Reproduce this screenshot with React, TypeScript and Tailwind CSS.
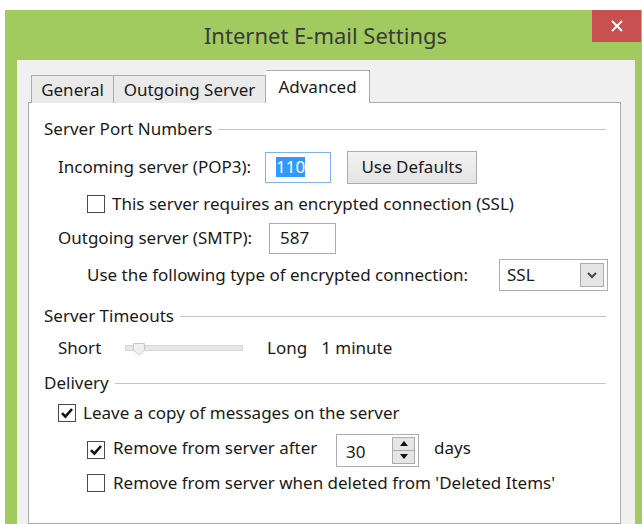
import React from "react";

const font = { fontFamily: '"Noto Sans", "Open Sans", sans-serif' };

const GroupTitle: React.FC<{ label: string; className?: string }> = ({ label, className }) => (
  <div className={`flex h-[20px] items-center gap-[6px] pr-[14px] ${className ?? ""}`}>
    <span className="whitespace-nowrap">{label}</span>
    <div className="h-px flex-1 bg-[#c4c4c4]" />
  </div>
);

const CheckBox: React.FC<{ checked?: boolean }> = ({ checked }) => (
  <div className="flex h-[18px] w-[18px] shrink-0 items-center justify-center border border-[#4a4a4a] bg-white">
    {checked && (
      <svg width="14" height="14" viewBox="0 0 14 14">
        <path d="M2 7.2 L5.4 10.6 L12 3" fill="none" stroke="#111" strokeWidth="2.6" />
      </svg>
    )}
  </div>
);

const App: React.FC = () => {
  return (
    <div className="h-[524px] w-[642px] overflow-hidden bg-white pl-[5px] pt-[10px] text-[17px] leading-[20px] text-[#1a1a1a]" style={font}>
      <div className="relative h-[514px] bg-[#a1cb5e]">
        {/* title bar */}
        <div className="flex h-[50px] items-center justify-center pl-[4px] text-[22px] text-[#3a3a3a]">
          Internet E-mail Settings
        </div>
        <div className="absolute right-[1px] top-0 flex h-[32px] w-[49px] items-center justify-center bg-[#c75050]">
          <svg width="12" height="12" viewBox="0 0 12 12">
            <path d="M1 1 L11 11 M11 1 L1 11" stroke="#fff" strokeWidth="2" />
          </svg>
        </div>

        {/* dialog body */}
        <div className="ml-[12px] mr-[7px] h-[464px] bg-[#f0f0f0] pl-[11px] pr-[14px] pt-[10px]">
          {/* tabs */}
          <div className="relative z-10 flex h-[33px] items-end pl-[3px]">
            <div className="flex h-[28px] w-[83px] items-center justify-center border border-b-0 border-[#acacac] bg-[#eaeaea]">
              General
            </div>
            <div className="flex h-[28px] w-[152px] items-center justify-center border border-b-0 border-l-0 border-[#acacac] bg-[#eaeaea]">
              Outgoing Server
            </div>
            <div className="flex h-[33px] w-[104px] items-start justify-center border border-b-0 border-l-0 border-[#acacac] bg-white pt-[6px]">
              Advanced
            </div>
          </div>

          {/* tab page */}
          <div className="-mt-px flex h-[422px] flex-col border border-[#acacac] bg-white pl-[15px] pt-[16px]">
            <GroupTitle label="Server Port Numbers" />

            <div className="mt-[12px] flex h-[32px] items-center pl-[14px]">
              <span className="w-[207px] whitespace-nowrap">Incoming server (POP3):</span>
              <div className="flex h-[31px] w-[66px] items-center border border-[#7eb4ea] pl-[10px]">
                <span className="bg-[#3399ff] text-white">110</span>
              </div>
              <div className="ml-[16px] flex h-[33px] w-[130px] items-center justify-center border border-[#acacac] bg-gradient-to-b from-[#f2f2f2] to-[#e4e4e4]">
                Use Defaults
              </div>
            </div>

            <div className="mt-[11px] flex h-[20px] items-center gap-[7px] pl-[43px]">
              <CheckBox />
              <span className="whitespace-nowrap">This server requires an encrypted connection (SSL)</span>
            </div>

            <div className="mt-[8px] flex h-[32px] items-center pl-[14px]">
              <span className="w-[211px] whitespace-nowrap">Outgoing server (SMTP):</span>
              <div className="flex h-[31px] w-[67px] items-center border border-[#abadb3] pl-[10px]">587</div>
            </div>

            <div className="mt-[5px] flex h-[32px] items-center pl-[43px]">
              <span className="w-[412px] whitespace-nowrap">Use the following type of encrypted connection:</span>
              <div className="flex h-[32px] w-[109px] items-center justify-between border border-[#abadb3] pl-[7px] pr-[3px]">
                <span>SSL</span>
                <div className="flex h-[24px] w-[24px] items-center justify-center border border-[#acacac] bg-[#e5e5e5]">
                  <svg width="10" height="7" viewBox="0 0 10 7">
                    <path d="M1 1 L5 5 L9 1" fill="none" stroke="#444" strokeWidth="2" />
                  </svg>
                </div>
              </div>
            </div>

            <GroupTitle label="Server Timeouts" className="mt-[15px]" />

            <div className="mt-[12px] flex h-[20px] items-center pl-[14px]">
              <span className="w-[67px]">Short</span>
              <div className="relative h-[6px] w-[118px] border border-[#d6d6d6] bg-[#e7e7e7]">
                <svg className="absolute -top-[3px] left-[7px]" width="12" height="13" viewBox="0 0 12 13">
                  <path d="M0.5 0.5 H11.5 V7 L6 12 L0.5 7 Z" fill="#f0f0f0" stroke="#c8c8c8" />
                </svg>
              </div>
              <span className="ml-[24px]">Long</span>
              <span className="ml-[14px]">1 minute</span>
            </div>

            <GroupTitle label="Delivery" className="mt-[15px]" />

            <div className="mt-[10px] flex h-[20px] items-center gap-[7px] pl-[14px]">
              <CheckBox checked />
              <span className="whitespace-nowrap">Leave a copy of messages on the server</span>
            </div>

            <div className="mt-[10px] flex h-[34px] items-center pl-[43px]">
              <CheckBox checked />
              <span className="ml-[8px] w-[223px] -translate-y-[2px] whitespace-nowrap">Remove from server after</span>
              <div className="flex h-[33px] w-[83px] items-center justify-between border border-[#abadb3] pl-[9px] pr-[3px]">
                <span className="translate-y-[2px]">30</span>
                <div className="flex h-[27px] w-[23px] flex-col border border-[#acacac] bg-[#e5e5e5]">
                  <div className="flex flex-1 items-center justify-center border-b border-[#acacac]">
                    <svg width="8" height="5" viewBox="0 0 8 5">
                      <path d="M0 5 L4 0 L8 5 Z" fill="#111" />
                    </svg>
                  </div>
                  <div className="flex flex-1 items-center justify-center">
                    <svg width="8" height="5" viewBox="0 0 8 5">
                      <path d="M0 0 L4 5 L8 0 Z" fill="#111" />
                    </svg>
                  </div>
                </div>
              </div>
              <span className="ml-[15px] -translate-y-[2px]">days</span>
            </div>

            <div className="mt-[6px] flex h-[20px] items-center gap-[8px] pl-[43px]">
              <CheckBox />
              <span className="whitespace-nowrap">Remove from server when deleted from 'Deleted Items'</span>
            </div>
          </div>
        </div>
      </div>
    </div>
  );
};

export default App;
